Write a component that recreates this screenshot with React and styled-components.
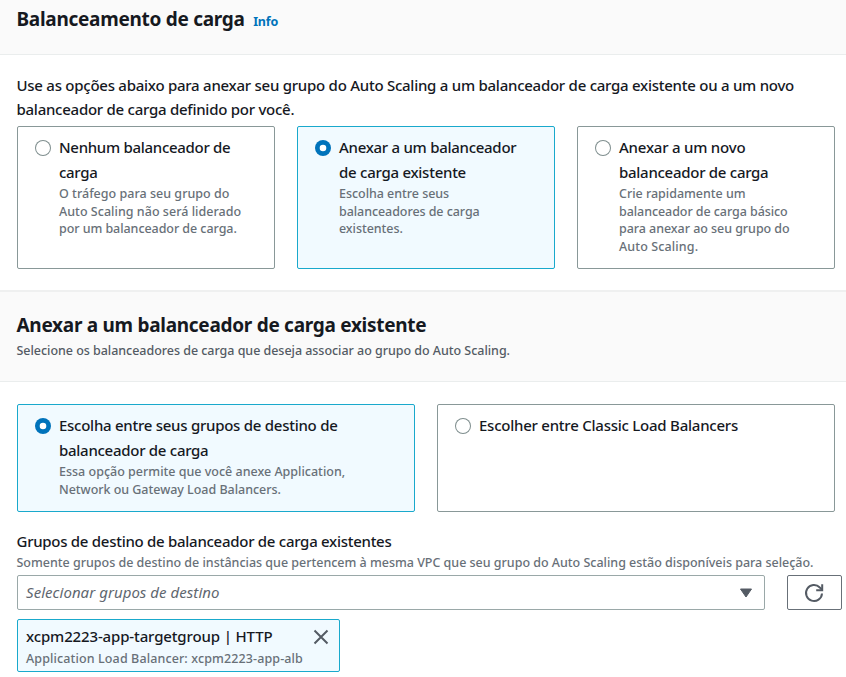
import React from 'react';
import styled, { createGlobalStyle } from 'styled-components';

const Global = createGlobalStyle`
  * { box-sizing: border-box; }
  body {
    margin: 0;
    background: #fff;
    color: #16191f;
    font-family: "Noto Sans", "Open Sans", sans-serif;
    font-weight: 500;
    overflow: hidden;
  }
  h2, p { margin: 0; }
`;

const Page = styled.main`
  width: 846px;
  height: 677px;
  overflow: hidden;
`;

const SectionHeader = styled.header`
  height: ${(p) => p.$height}px;
  padding: ${(p) => p.$top}px 16.5px 0;
  background: #fafafa;
  border-bottom: 1px solid #eaeded;
  border-top: ${(p) => (p.$divided ? '2px solid #eff0f0' : '0')};
`;

const TitleRow = styled.div`
  display: flex;
  align-items: baseline;
  gap: 8.5px;
`;

const Heading = styled.h2`
  font-size: 19px;
  line-height: 24px;
  font-weight: 700;
  letter-spacing: -0.285px;
  white-space: nowrap;
`;

const InfoLink = styled.a`
  color: #0073bb;
  font-size: 12.5px;
  font-weight: 700;
  letter-spacing: -0.15px;
  text-decoration: none;
`;

const Line = styled.span`
  display: block;
  white-space: nowrap;
  letter-spacing: ${(p) => p.$track || 0}px;
`;

const BodyText = styled.p`
  font-size: 15px;
  line-height: 24px;
`;

const HintText = styled.p`
  font-size: 12.5px;
  line-height: ${(p) => p.$leading || 18}px;
  margin-top: ${(p) => p.$top || 0}px;
  color: ${(p) => p.$color || '#687078'};
`;

const Section = styled.section`
  padding: ${(p) => p.$top}px 11.5px ${(p) => p.$bottom || 0}px 16.5px;
`;

const Tiles = styled.div`
  display: grid;
  grid-template-columns: repeat(${(p) => p.$columns}, 1fr);
  gap: 22px;
  height: ${(p) => p.$height}px;
  margin-top: ${(p) => p.$top || 0}px;
`;

const TileBox = styled.label`
  display: flex;
  gap: 8px;
  padding: 8px 17.5px;
  border: 1px solid ${(p) => (p.$selected ? '#19a9cc' : '#899898')};
  border-radius: 2px;
  background: ${(p) => (p.$selected ? '#f1faff' : '#fff')};
`;

const Radio = styled.span`
  flex: none;
  width: 16px;
  height: 16px;
  margin-top: 5px;
  border-radius: 50%;
  background: #fff;
  box-shadow: ${(p) => (p.$selected ? 'inset 0 0 0 4.7px #0073bb' : 'inset 0 0 0 1px #7f8e8e')};
`;

const TileTitle = styled.div`
  font-size: 15px;
  line-height: 25px;
`;

const SelectRow = styled.div`
  display: flex;
  gap: 22px;
  margin-top: 3px;
  margin-right: -7px;
`;

const Select = styled.div`
  flex: 1;
  height: 35px;
  display: flex;
  align-items: center;
  justify-content: space-between;
  padding: 0 11.5px 0 8.5px;
  border: 1px solid #9aa8a8;
  border-radius: 2px;
`;

const Placeholder = styled.span`
  padding-bottom: 2px;
  font-size: 15px;
  line-height: 24px;
  font-style: italic;
  font-weight: 400;
  letter-spacing: 0.05px;
  color: #5f676f;
`;

const RefreshButton = styled.button`
  width: 55px;
  height: 35px;
  padding: 0;
  display: flex;
  align-items: center;
  justify-content: center;
  background: #fff;
  border: 1px solid #687078;
  border-radius: 2px;
`;

const Token = styled.div`
  display: flex;
  justify-content: space-between;
  align-items: flex-start;
  width: 323.5px;
  height: 53px;
  margin-top: 9px;
  padding: 4px 10px 0 8.5px;
  border: 1px solid #19a9cc;
  border-radius: 2px;
  background: #f1faff;
`;

const Dismiss = styled.button`
  display: flex;
  padding: 0;
  margin-top: 5px;
  border: 0;
  background: none;
`;

function Lines({ items }) {
  return items.map(([text, track]) => <Line key={text} $track={track}>{text}</Line>);
}

function Tile({ selected, title, description = [] }) {
  return (
    <TileBox $selected={selected}>
      <Radio $selected={selected} />
      <div>
        <TileTitle><Lines items={title} /></TileTitle>
        <HintText as="div" $leading={17.7}><Lines items={description} /></HintText>
      </div>
    </TileBox>
  );
}

export default function App() {
  return (
    <Page>
      <Global />
      <SectionHeader $height={55} $top={7}>
        <TitleRow>
          <Heading>Balanceamento de carga</Heading>
          <InfoLink>Info</InfoLink>
        </TitleRow>
      </SectionHeader>

      <Section $top={18} $bottom={21}>
        <BodyText>
          <Lines
            items={[
              ['Use as opções abaixo para anexar seu grupo do Auto Scaling a um balanceador de carga existente ou a um novo', -0.257],
              ['balanceador de carga definido por você.', -0.26],
            ]}
          />
        </BodyText>
        <Tiles $columns={3} $height={143} $top={5}>
          <Tile
            title={[['Nenhum balanceador de', -0.3], ['carga', -0.3]]}
            description={[
              ['O tráfego para seu grupo do', 0.02],
              ['Auto Scaling não será liderado', 0.03],
              ['por um balanceador de carga.', -0.06],
            ]}
          />
          <Tile
            selected
            title={[['Anexar a um balanceador', -0.28], ['de carga existente', -0.26]]}
            description={[['Escolha entre seus', -0.04], ['balanceadores de carga', -0.07], ['existentes.', -0.06]]}
          />
          <Tile
            title={[['Anexar a um novo', -0.22], ['balanceador de carga', -0.28]]}
            description={[
              ['Crie rapidamente um', -0.02],
              ['balanceador de carga básico', -0.07],
              ['para anexar ao seu grupo do', -0.05],
              ['Auto Scaling.', 0.12],
            ]}
          />
        </Tiles>
      </Section>

      <SectionHeader $height={92} $top={21} $divided>
        <Heading>Anexar a um balanceador de carga existente</Heading>
        <HintText $color="#545b64" $top={5}>
          <Lines items={[['Selecione os balanceadores de carga que deseja associar ao grupo do Auto Scaling.', -0.035]]} />
        </HintText>
      </SectionHeader>

      <Section $top={22}>
        <Tiles $columns={2} $height={108}>
          <Tile
            selected
            title={[['Escolha entre seus grupos de destino de', -0.264], ['balanceador de carga', -0.28]]}
            description={[
              ['Essa opção permite que você anexe Application,', 0],
              ['Network ou Gateway Load Balancers.', -0.03],
            ]}
          />
          <Tile title={[['Escolher entre Classic Load Balancers', -0.24]]} />
        </Tiles>
      </Section>

      <Section $top={17}>
        <BodyText>
          <Lines items={[['Grupos de destino de balanceador de carga existentes', -0.28]]} />
        </BodyText>
        <HintText $top={1}>
          <Lines
            items={[
              ['Somente grupos de destino de instâncias que pertencem à mesma VPC que seu grupo do Auto Scaling estão disponíveis para seleção.', -0.015],
            ]}
          />
        </HintText>
        <SelectRow>
          <Select>
            <Placeholder>Selecionar grupos de destino</Placeholder>
            <svg width="13" height="10" viewBox="0 0 13 10">
              <path d="M1.5 1h11L7 9z" fill="#545b64" stroke="#545b64" strokeLinejoin="round" />
            </svg>
          </Select>
          <RefreshButton aria-label="Atualizar">
            <svg width="20" height="20" viewBox="0 0 20 20" fill="none" stroke="#545b64" strokeWidth="2">
              <path d="M18 10.5A8 8 0 1 1 15.8 4.5L18 6.6" />
              <path d="M18.2 1.2v6h-6" />
            </svg>
          </RefreshButton>
        </SelectRow>
        <Token>
          <div>
            <BodyText as="div"><Line $track={-0.14}>xcpm2223-app-targetgroup | HTTP</Line></BodyText>
            <HintText as="div" $top={2}><Line $track={0.12}>Application Load Balancer: xcpm2223-app-alb</Line></HintText>
          </div>
          <Dismiss aria-label="Remover">
            <svg width="16" height="16" viewBox="0 0 16 16" fill="none" stroke="#545b64" strokeWidth="2">
              <path d="M1.5 1.5l13 13M14.5 1.5l-13 13" />
            </svg>
          </Dismiss>
        </Token>
      </Section>
    </Page>
  );
}
